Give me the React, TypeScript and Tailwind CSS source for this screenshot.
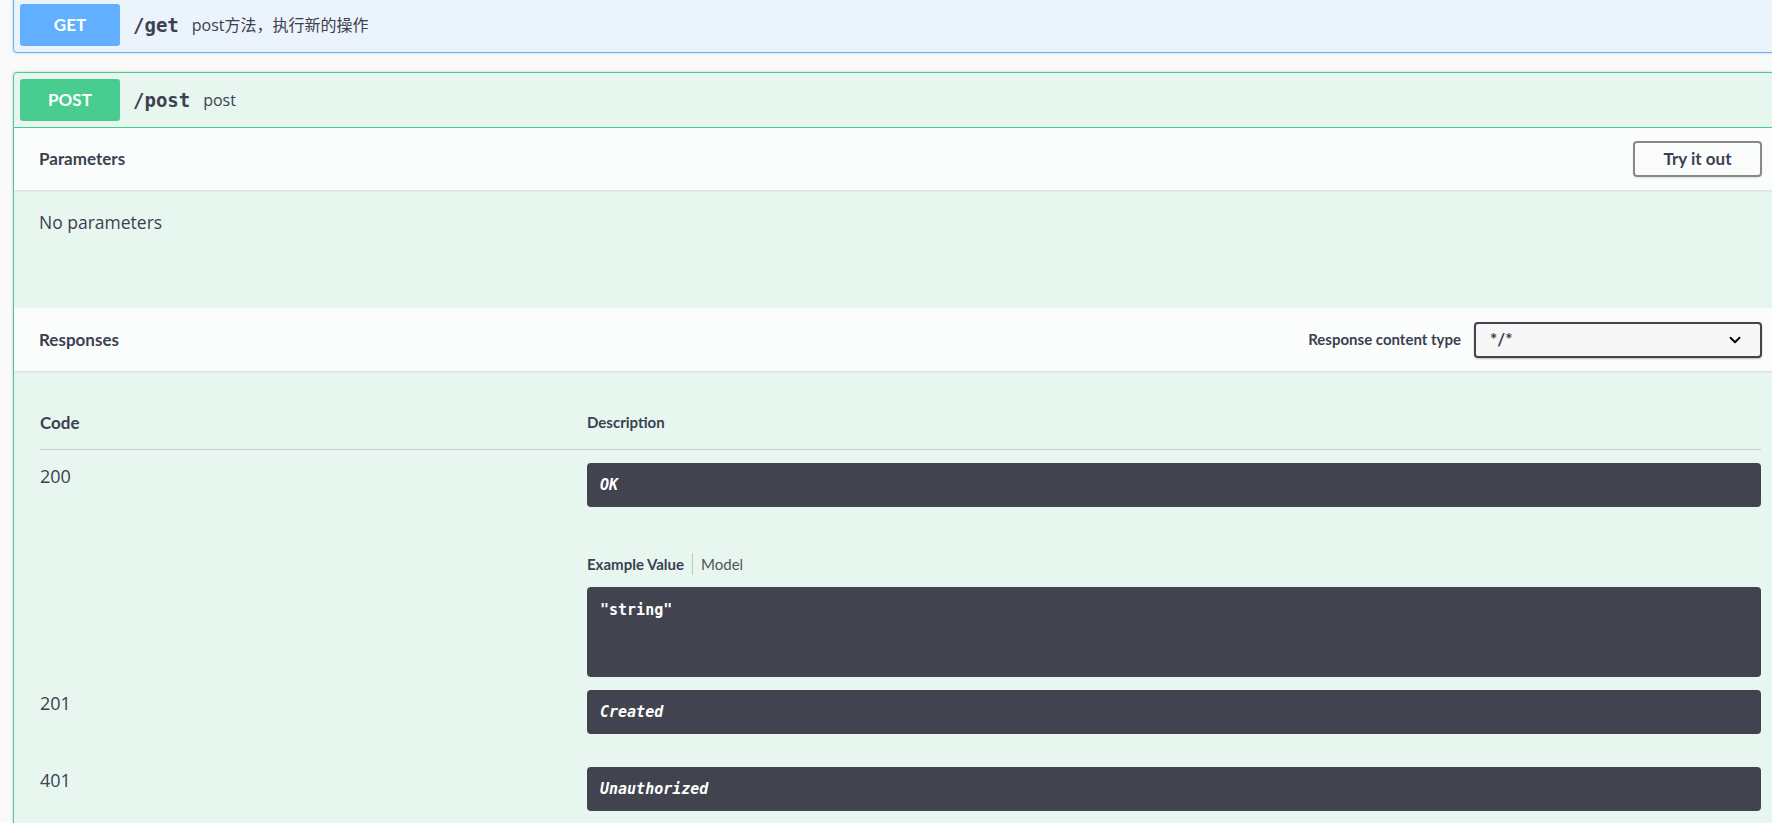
import { ChevronDown } from "lucide-react";

const sans = "font-['Open_Sans','Noto_Sans_CJK_SC',sans-serif]";
const head = "font-['Lato','Open_Sans',sans-serif]";
const mono = "font-['DejaVu_Sans_Mono','Liberation_Mono',monospace]";

function Summary({ method, path, desc, color }: { method: string; path: string; desc: string; color: string }) {
  return (
    <div className="flex items-center p-[6px]">
      <div className={`flex h-[42px] w-[100px] items-center justify-center rounded-[3px] ${color} ${head} text-[17px] font-bold text-white`}>
        {method}
      </div>
      <span className={`ml-[13px] ${mono} text-[19px] font-bold text-[#3b4151]`}>{path}</span>
      <span className={`ml-[13px] ${sans} text-[16px] text-[#3b4151]`}>{desc}</span>
    </div>
  );
}

function DarkBox({ children, tall }: { children: React.ReactNode; tall?: boolean }) {
  return (
    <div
      className={`rounded-[4px] bg-[#41444e] px-[13px] ${mono} text-[15px] font-bold text-white ${
        tall ? "h-[90px] pt-[12px] leading-[22px]" : "flex h-[44px] items-center italic"
      }`}
    >
      {children}
    </div>
  );
}

export default function App() {
  return (
    <div className={`h-[823px] w-full overflow-hidden bg-[#fafafa] ${sans} text-[#3b4151]`}>
      <div className="ml-[13px] mt-[-3px] w-[1775px]">
        {/* GET */}
        <div className="rounded-[4px] border border-[#61affe] bg-[#ebf3fb] shadow-[0_0_3px_rgba(0,0,0,0.19)]">
          <Summary method="GET" path="/get" desc="post方法，执行新的操作" color="bg-[#61affe]" />
        </div>

        {/* POST */}
        <div className="mt-[19px] rounded-[4px] border border-[#49cc90] bg-[#e8f6f0] shadow-[0_0_3px_rgba(0,0,0,0.19)]">
          <div className="border-b border-[#49cc90]">
            <Summary method="POST" path="/post" desc="post" color="bg-[#49cc90]" />
          </div>

          <div className="flex h-[62px] items-center justify-between bg-[rgba(255,255,255,0.8)] px-[25px] shadow-[0_1px_2px_rgba(0,0,0,0.1)]">
            <h4 className={`${head} text-[17px] font-bold`}>Parameters</h4>
            <button className={`h-[36px] w-[129px] rounded-[4px] border-2 border-[#888] ${head} text-[17px] font-bold text-[#3b4151] shadow-[0_1px_2px_rgba(0,0,0,0.1)]`}>
              Try it out
            </button>
          </div>

          <div className="h-[118px] px-[25px] pt-[19px]">
            <p className="text-[17.5px] leading-[26px]">No parameters</p>
          </div>

          <div className="flex h-[63px] items-center justify-between bg-[rgba(255,255,255,0.8)] px-[25px] shadow-[0_1px_2px_rgba(0,0,0,0.1)]">
            <h4 className={`${head} text-[17px] font-bold`}>Responses</h4>
            <div className="flex items-center gap-[13px]">
              <span className={`${head} text-[15px] font-bold`}>Response content type</span>
              <div className="flex h-[36px] w-[288px] items-center justify-between rounded-[4px] border-2 border-[#41444e] bg-[#f7f7f7] pl-[14px] pr-[16px] shadow-[0_1px_2px_rgba(0,0,0,0.25)]">
                <span className={`${head} text-[17px] font-bold`}>*/*</span>
                <ChevronDown size={18} strokeWidth={2.5} className="text-black" />
              </div>
            </div>
          </div>

          <div className="px-[26px] pt-[25px]">
            <div className="grid h-[54px] grid-cols-[547px_1fr] items-center border-b border-[rgba(59,65,81,0.2)]">
              <span className={`${head} text-[17px] font-bold`}>Code</span>
              <span className={`${head} text-[15px] font-bold`}>Description</span>
            </div>

            <div className="grid grid-cols-[547px_1fr] pt-[13px]">
              <span className="text-[18px] leading-[26px]">200</span>
              <div>
                <DarkBox>OK</DarkBox>
                <div className="mt-[46px] flex h-[22px] items-center">
                  <span className={`${head} border-r border-[rgba(59,65,81,0.25)] pr-[8px] text-[15px] font-bold leading-[22px]`}>Example Value</span>
                  <span className={`${head} pl-[8px] text-[15px] leading-[22px] text-[#555]`}>Model</span>
                </div>
                <div className="mt-[12px]">
                  <DarkBox tall>"string"</DarkBox>
                </div>
              </div>
            </div>

            <div className="grid grid-cols-[547px_1fr] pb-[20px] pt-[13px]">
              <span className="text-[18px] leading-[26px]">201</span>
              <DarkBox>Created</DarkBox>
            </div>

            <div className="grid grid-cols-[547px_1fr] pb-[20px] pt-[13px]">
              <span className="text-[18px] leading-[26px]">401</span>
              <DarkBox>Unauthorized</DarkBox>
            </div>
          </div>
        </div>
      </div>
    </div>
  );
}
